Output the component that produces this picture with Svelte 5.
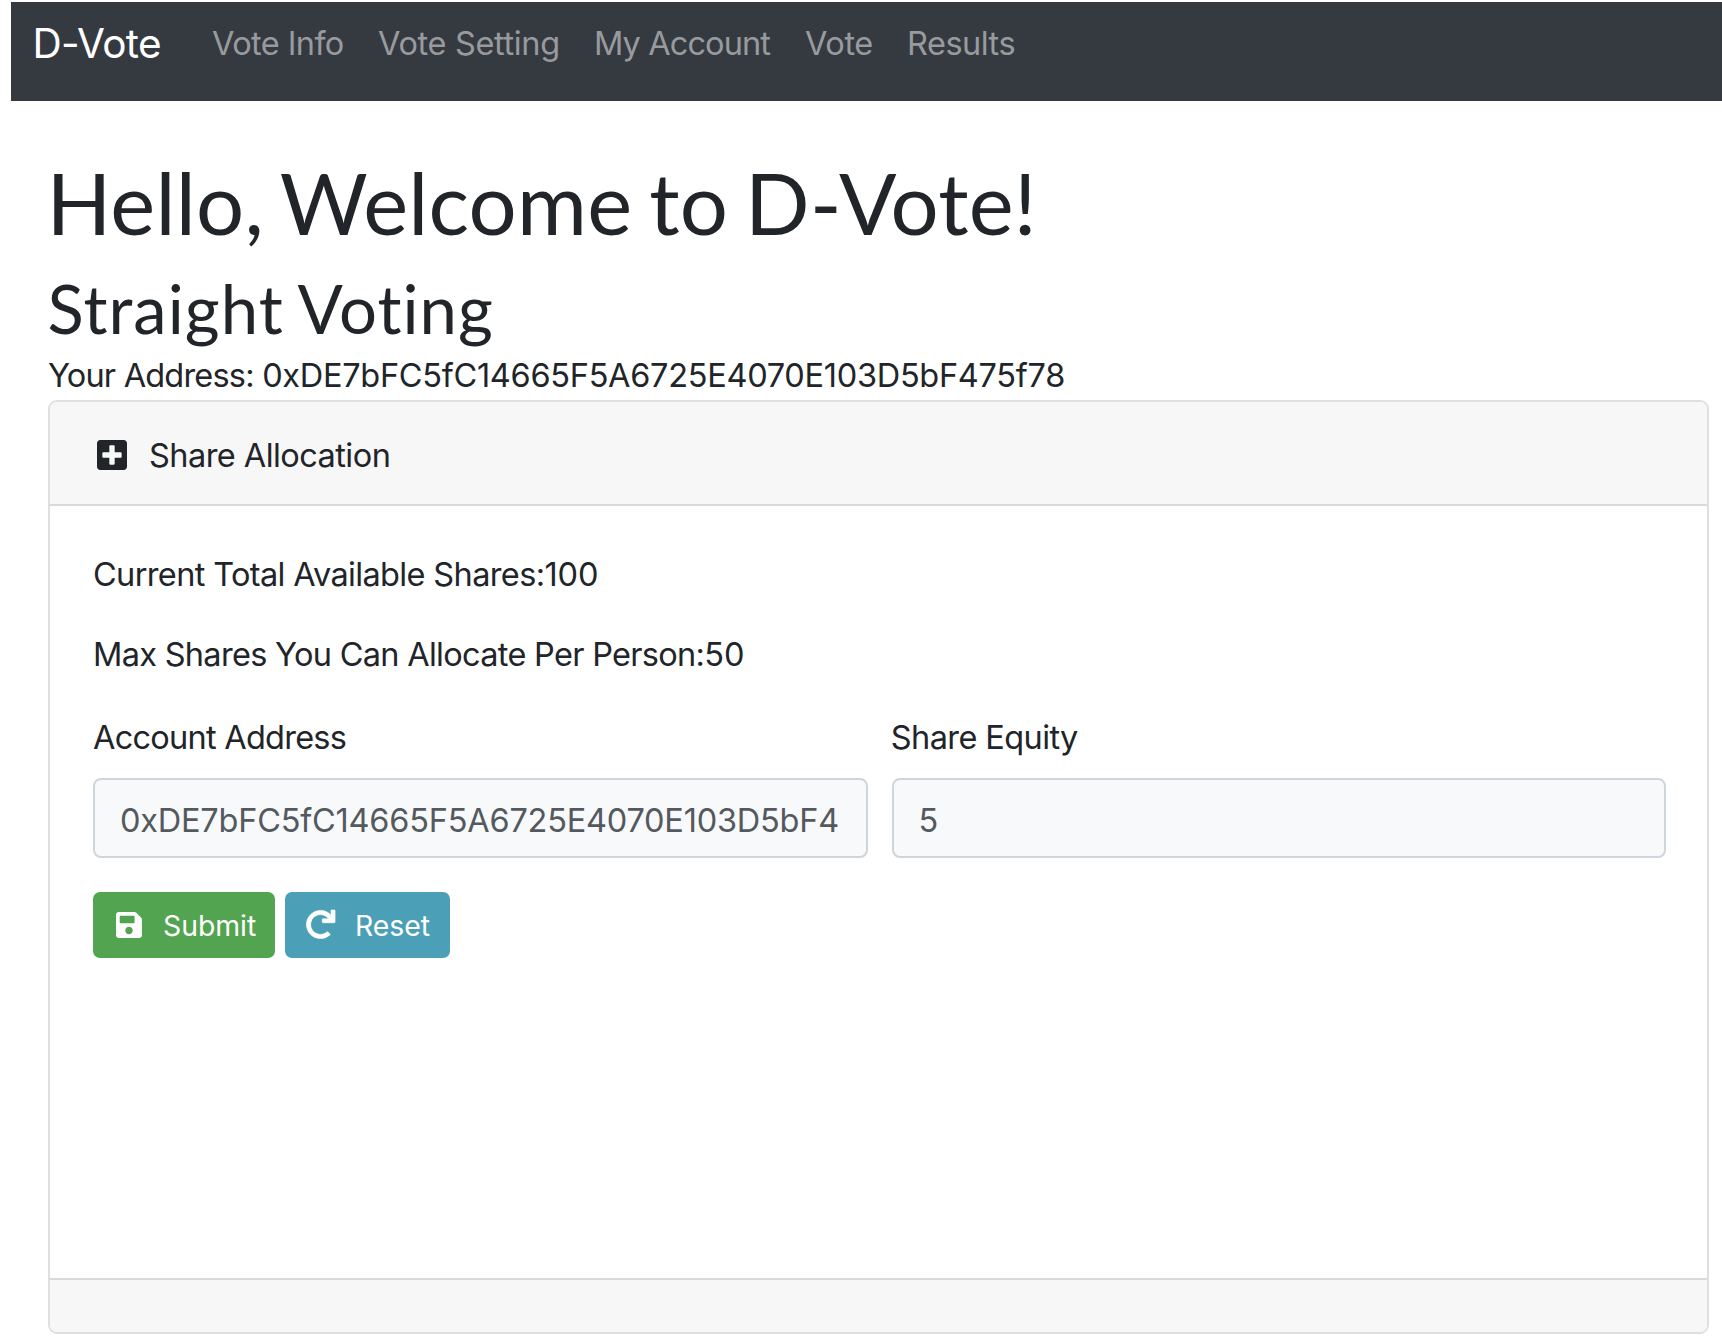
<script>
  const links = [
    { label: 'Vote Info', cls: 'info' },
    { label: 'Vote Setting', cls: 'setting' },
    { label: 'My Account', cls: 'account' },
    { label: 'Vote', cls: 'vote' },
    { label: 'Results', cls: 'results' }
  ];
  const address = '0xDE7bFC5fC14665F5A6725E4070E103D5bF475f78';
</script>

<div class="page">
  <nav class="navbar">
    <span class="brand">D-Vote</span>
    {#each links as link}
      <span class="link {link.cls}">{link.label}</span>
    {/each}
  </nav>

  <main>
    <h1>Hello, Welcome to D-Vote!</h1>
    <h2>Straight Voting</h2>
    <div class="address">Your Address: <span class="hex">{address}</span></div>

    <section class="card">
      <header>
        <svg class="plus" viewBox="0 32 448 448"><path fill="currentColor" d="M400 32H48C21.5 32 0 53.5 0 80v352c0 26.5 21.5 48 48 48h352c26.5 0 48-21.5 48-48V80c0-26.5-21.5-48-48-48zm-32 252c0 6.6-5.4 12-12 12h-92v92c0 6.6-5.4 12-12 12h-56c-6.6 0-12-5.4-12-12v-92H92c-6.6 0-12-5.4-12-12v-56c0-6.6 5.4-12 12-12h92v-92c0-6.6 5.4-12 12-12h56c6.6 0 12 5.4 12 12v92h92c6.6 0 12 5.4 12 12v56z" /></svg>
        <span class="title">Share Allocation</span>
      </header>
      <div class="body">
        <p class="total">Current Total Available Shares:<span class="num">100</span></p>
        <p class="max">Max Shares You Can Allocate Per Person:<span class="num">50</span></p>
        <div class="fields">
          <label>
            <span class="label acct">Account Address</span>
            <input type="text" value={address} />
          </label>
          <label>
            <span class="label equity">Share Equity</span>
            <input type="text" value="5" />
          </label>
        </div>
        <div class="buttons">
          <button class="submit">
            <svg viewBox="0 32 448 448"><path fill="currentColor" d="M433.941 129.941l-83.882-83.882A48 48 0 0 0 316.118 32H48C21.49 32 0 53.49 0 80v352c0 26.51 21.49 48 48 48h352c26.51 0 48-21.49 48-48V163.882a48 48 0 0 0-14.059-33.941zM224 416c-35.346 0-64-28.654-64-64 0-35.346 28.654-64 64-64s64 28.654 64 64c0 35.346-28.654 64-64 64zm96-304.52V212c0 6.627-5.373 12-12 12H76c-6.627 0-12-5.373-12-12V108c0-6.627 5.373-12 12-12h228.52c3.183 0 6.235 1.264 8.485 3.515l3.48 3.48A11.996 11.996 0 0 1 320 111.48z" /></svg>
            <span>Submit</span>
          </button>
          <button class="reset">
            <svg viewBox="0 0 512 512"><path fill="currentColor" d="M500.33 0h-47.41a12 12 0 0 0-12 12.57l4 82.76A247.42 247.42 0 0 0 256 8C119.34 8 7.9 119.53 8 256.19 8.1 393.07 119.1 504 256 504a247.1 247.1 0 0 0 166.18-63.91 12 12 0 0 0 .48-17.43l-34-34a12 12 0 0 0-16.38-.55A176 176 0 1 1 402.1 157.8l-101.53-4.87a12 12 0 0 0-12.57 12v47.41a12 12 0 0 0 12 12h200.33a12 12 0 0 0 12-12V12a12 12 0 0 0-12-12z" stroke="currentColor" stroke-width="12" /></svg>
            <span>Reset</span>
          </button>
        </div>
      </div>
      <footer></footer>
    </section>
  </main>
</div>

<style>
  :global(body) { background: #fff; }
  .page {
    box-sizing: border-box;
    height: 1344px;
    padding-top: 2px;
    overflow: hidden;
    font-family: Inter, "Liberation Sans", sans-serif;
    font-size: 32.5px;
    line-height: 50px;
    color: #212529;
    white-space: nowrap;
  }
  .navbar {
    box-sizing: border-box;
    display: flex;
    height: 99px;
    margin-left: 11px;
    padding: 16px 0 0 21.5px;
    background: #353a41;
  }
  .brand { width: 179.5px; font-size: 40.5px; line-height: 52px; color: #fff; letter-spacing: -0.65px; }
  .link { color: #989b9e; line-height: 51px; }
  .info { width: 166px; letter-spacing: -0.6px; }
  .setting { width: 216px; letter-spacing: -0.35px; }
  .account { width: 211px; letter-spacing: -0.9px; }
  .vote { width: 102px; letter-spacing: -0.4px; }
  .results { letter-spacing: -0.5px; }

  main { padding: 51px 13px 0 48px; }
  h1, h2, p { margin: 0; font-weight: 400; }
  h1, h2 { font-family: Lato, sans-serif; font-variant-ligatures: none; }
  h1 { margin-left: -1.5px; font-size: 85px; line-height: 100px; letter-spacing: 0.22px; word-spacing: -5px; }
  h2 { margin: 16px 0 0 -0.5px; font-size: 67px; line-height: 80px; letter-spacing: 1.05px; word-spacing: -2px; }
  .address { height: 52px; line-height: 56px; letter-spacing: -0.8px; }
  .hex { letter-spacing: -0.29px; }

  .card {
    box-sizing: border-box;
    display: flex;
    flex-direction: column;
    height: 934px;
    border: 2px solid #dfdfdf;
    border-radius: 9px;
    overflow: hidden;
  }
  header {
    box-sizing: border-box;
    display: flex;
    align-items: center;
    height: 104px;
    padding: 6px 0 0 47px;
    gap: 22px;
    background: #f7f7f7;
    border-bottom: 2px solid #d9d9d9;
  }
  .plus { width: 30px; height: 30px; margin-bottom: 2px; }
  .title { letter-spacing: -0.55px; }
  .body { flex: 1; padding: 44px 41px 0 43px; }
  .total { height: 80px; letter-spacing: -0.64px; }
  .max { height: 83px; letter-spacing: -0.7px; }
  .num { letter-spacing: -0.1px; }
  .fields { display: grid; grid-template-columns: 1fr 1fr; gap: 24px; }
  label { display: block; min-width: 0; }
  .label { display: block; height: 65px; }
  .acct { letter-spacing: -0.75px; }
  .equity { letter-spacing: -0.6px; margin-left: -0.7px; }
  input {
    box-sizing: border-box;
    display: block;
    width: 100%;
    height: 80px;
    margin: 0;
    padding: 4px 27px 0 25px;
    border: 2px solid #cfd5db;
    border-radius: 8px;
    background: #f8f9fb;
    color: #54595f;
    font: inherit;
    letter-spacing: -0.22px;
  }
  .buttons { display: flex; gap: 10px; margin-top: 34px; }
  button {
    display: flex;
    align-items: center;
    box-sizing: border-box;
    height: 66px;
    padding: 2px 0 0 23px;
    border: 0;
    border-radius: 7px;
    color: #fff;
    font: 28.4px/44px Inter, "Liberation Sans", sans-serif;
    letter-spacing: -0.05px;
  }
  .submit { width: 182px; background: #53a451; gap: 21px; }
  .reset { width: 165px; background: #4b9fb6; gap: 20px; padding-left: 21px; }
  .submit svg { width: 26px; height: 26px; margin-bottom: 2px; }
  .reset svg { width: 29px; height: 29px; margin-bottom: 3px; overflow: visible; }
  footer { box-sizing: border-box; height: 54px; background: #f7f7f7; border-top: 2px solid #d9d9d9; }
</style>
